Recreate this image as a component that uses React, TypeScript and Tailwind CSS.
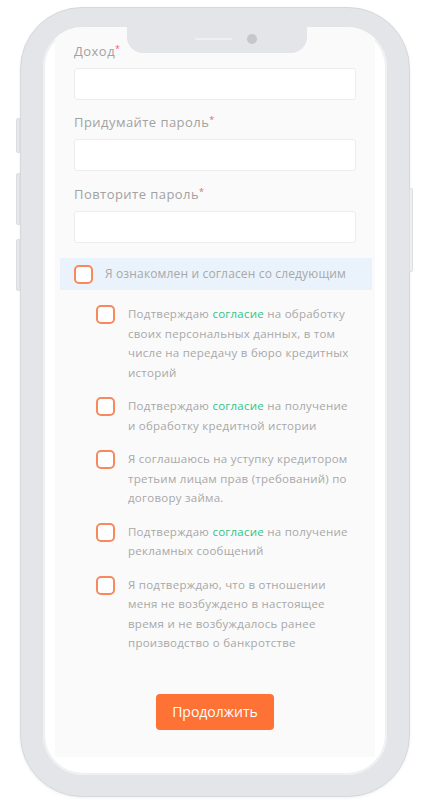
import React from "react";

type Part = { text: string; green?: boolean };

const consents: Part[][][] = [
  [
    [{ text: "Подтверждаю " }, { text: "согласие", green: true }, { text: " на обработку" }],
    [{ text: "своих персональных данных, в том" }],
    [{ text: "числе на передачу в бюро кредитных" }],
    [{ text: "историй" }],
  ],
  [
    [{ text: "Подтверждаю " }, { text: "согласие", green: true }, { text: " на получение" }],
    [{ text: "и обработку кредитной истории" }],
  ],
  [
    [{ text: "Я соглашаюсь на уступку кредитором" }],
    [{ text: "третьим лицам прав (требований) по" }],
    [{ text: "договору займа." }],
  ],
  [
    [{ text: "Подтверждаю " }, { text: "согласие", green: true }, { text: " на получение" }],
    [{ text: "рекламных сообщений" }],
  ],
  [
    [{ text: "Я подтверждаю, что в отношении" }],
    [{ text: "меня не возбуждено в настоящее" }],
    [{ text: "время и не возбуждалось ранее" }],
    [{ text: "производство о банкротстве" }],
  ],
];

const Box = () => (
  <span className="block w-[19px] h-[19px] shrink-0 rounded-[5px] border-2 border-[#f68a5e] bg-white" />
);

const Key = ({ className }: { className: string }) => (
  <span className={`block w-[4px] bg-[#e6e8ea] border border-[#dcdfe2] ${className}`} />
);

const Field = ({ label, className }: { label: string; className?: string }) => (
  <div className={className}>
    <div className="h-[18px] text-[13px] leading-[18px] tracking-[0.45px] text-[#a2a2a2]">
      {label}
      <span className="relative -top-[4px] text-[9px] text-[#f0607a]">*</span>
    </div>
    <div className="mt-[8px] h-[32px] rounded-[3px] border border-[#ececec] bg-white" />
  </div>
);

const App = () => {
  return (
    <div
      className="w-[429px] h-[802px] bg-white pt-[7px] pl-[20px]"
      style={{ fontFamily: '"Open Sans", "Noto Sans", sans-serif' }}
    >
      <div className="relative w-[390px] h-[790px] rounded-[62px] bg-[#e3e5e8] border border-[#d6d9dc] pt-[19px] pl-[22px] shadow-[0_1px_3px_rgba(0,0,0,0.06)]">
        {/* side keys */}
        <div className="absolute -left-[5px] top-[110px] flex flex-col">
          <Key className="h-[35px] rounded-l-[2px]" />
          <Key className="mt-[20px] h-[52px] rounded-l-[2px]" />
          <Key className="mt-[14px] h-[52px] rounded-l-[2px]" />
        </div>
        <div className="absolute -right-[4px] top-[180px]">
          <Key className="h-[84px] rounded-r-[2px] bg-[#eff0f2]" />
        </div>

        <div className="relative w-[344px] h-[748px] rounded-[40px] bg-white overflow-hidden shadow-[inset_0_0_0_2px_#eef0f2]">
          {/* notch with speaker and camera */}
          <div className="absolute left-[84px] top-0 w-[180px] h-[26px] rounded-b-[16px] bg-[#e3e5e8] flex items-center pl-[68px] gap-[15px] pb-[2px]">
            <span className="block w-[37px] h-[2px] rounded-full bg-[#eef0f2]" />
            <span className="block w-[10px] h-[10px] rounded-full bg-[#c4c7cb]" />
          </div>

          <div className="ml-[12px] w-[320px] bg-[#fafafa] pt-[15px] pb-[27px]">
            <div className="px-[19px]">
              <Field label="Доход" />
              <Field label="Придумайте пароль" className="mt-[13px]" />
              <Field label="Повторите пароль" className="mt-[14px]" />
            </div>

            <div className="mt-[15px] ml-[5px] mr-[3px] h-[32px] bg-[#eaf3fb] flex items-center pl-[14px] gap-[12px]">
              <Box />
              <span className="text-[12px] tracking-[0.15px] text-[#a8a8a8] whitespace-nowrap">
                Я ознакомлен и согласен со следующим
              </span>
            </div>

            <div className="mt-[14px] pl-[41px] flex flex-col gap-[14px]">
              {consents.map((lines, i) => (
                <div key={i} className="flex gap-[13px]">
                  <div className="pt-[1px]">
                    <Box />
                  </div>
                  <div className="text-[11.5px] leading-[19.5px] tracking-[0.25px] text-[#a8a8a8]">
                    {lines.map((line, j) => (
                      <div key={j} className="whitespace-nowrap">
                        {line.map((p, k) => (
                          <span key={k} className={p.green ? "text-[#2fc488]" : ""}>
                            {p.text}
                          </span>
                        ))}
                      </div>
                    ))}
                  </div>
                </div>
              ))}
            </div>

            <div className="mt-[41px] flex justify-center">
              <button className="w-[118px] h-[36px] rounded-[4px] bg-[#ff7236] text-white text-[14px] font-medium">
                Продолжить
              </button>
            </div>
          </div>
        </div>
      </div>
    </div>
  );
};

export default App;
